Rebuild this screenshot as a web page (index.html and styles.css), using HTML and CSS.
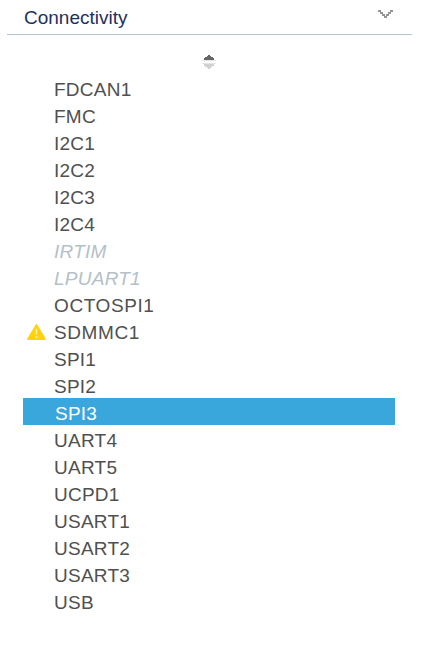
FILE: index.html
```html
<!DOCTYPE html>
<html lang="en">
<head>
    <meta charset="UTF-8">
    <meta name="viewport" content="width=device-width, initial-scale=1.0">
    <title>Connectivity</title>
    <link rel="stylesheet" href="styles.css">
</head>
<body>
    <div class="category">
        <div class="header">
            <h1>Connectivity</h1>
            <svg class="chevron" width="17" height="10" viewBox="0 0 17 10">
                <path d="M1 1h3v2h-3z M3 3h3v2h-3z M5 5h3v2h-3z M7 7h3v2h-3z M9 5h3v2h-3z M11 3h3v2h-3z M13 1h3v2h-3z" fill="#949494"/>
            </svg>
        </div>

        <div class="sorter">
            <svg width="14" height="18" viewBox="0 0 14 18">
                <path d="M2 7 V5 H3 V4 H5 V3 H6 V2 H8 V3 H9 V4 H11 V5 H12 V7 Z" fill="#666"/>
                <path d="M0 7.5 H14 M0 10.5 H14" stroke="#e4e4e4"/>
                <path d="M2 11 H12 V13 H10 V14 H9 V15 H8 V16 H6 V15 H5 V14 H3 V13 H2 Z" fill="#d0d0d0"/>
            </svg>
        </div>

        <ul class="peripherals">
            <li>FDCAN1</li>
            <li>FMC</li>
            <li>I2C1</li>
            <li>I2C2</li>
            <li>I2C3</li>
            <li>I2C4</li>
            <li class="disabled">IRTIM</li>
            <li class="disabled">LPUART1</li>
            <li class="wide">OCTOSPI1</li>
            <li class="warning wide">
                <svg class="warning-icon" width="19" height="16" viewBox="0 0 20 17">
                    <path d="M10 1 L19 16 L1 16 Z" fill="#ffd20a" stroke="#ffd20a" stroke-width="1.8" stroke-linejoin="round"/>
                    <path d="M10 5 V11 M10 12.5 V14.5" stroke="#fff0b0" stroke-width="1.4"/>
                </svg>
                SDMMC1
            </li>
            <li>SPI1</li>
            <li>SPI2</li>
            <li class="selected">SPI3</li>
            <li>UART4</li>
            <li>UART5</li>
            <li>UCPD1</li>
            <li>USART1</li>
            <li>USART2</li>
            <li>USART3</li>
            <li>USB</li>
        </ul>
    </div>
</body>
</html>
```
FILE: styles.css
```css
* {
    margin: 0;
    padding: 0;
    box-sizing: border-box;
}

body {
    font-family: "Liberation Sans", Arial, sans-serif;
    background: #fff;
    color: #505050;
}

.category {
    width: 405px;
    margin-left: 7px;
}

.header {
    display: flex;
    justify-content: space-between;
    height: 35px;
    padding: 7px 18px 0 17px;
    border-bottom: 1px solid #b4c4cc;
}

h1 {
    font-size: 19px;
    font-weight: normal;
    line-height: 22px;
    color: #1f2f62;
}

.chevron {
    margin-top: 2px;
}

.sorter {
    display: flex;
    justify-content: center;
    height: 39px;
    padding: 18px 2px 0 0;
}

.peripherals {
    width: 372px;
    margin-left: 16px;
    list-style: none;
    font-size: 19px;
    line-height: 23px;
    letter-spacing: 0.25px;
}

.peripherals li {
    display: flex;
    align-items: center;
    height: 27px;
    padding: 4px 0 0 31px;
}

.peripherals .wide {
    letter-spacing: 0.6px;
}

.peripherals .disabled {
    color: #b4c0c8;
    font-style: italic;
}

.peripherals .warning {
    padding-left: 4px;
}

.warning-icon {
    margin: 0 8px 2px 0;
}

.peripherals .selected {
    padding-left: 32px;
    background: #3aa7dc;
    color: #fff;
}
```
